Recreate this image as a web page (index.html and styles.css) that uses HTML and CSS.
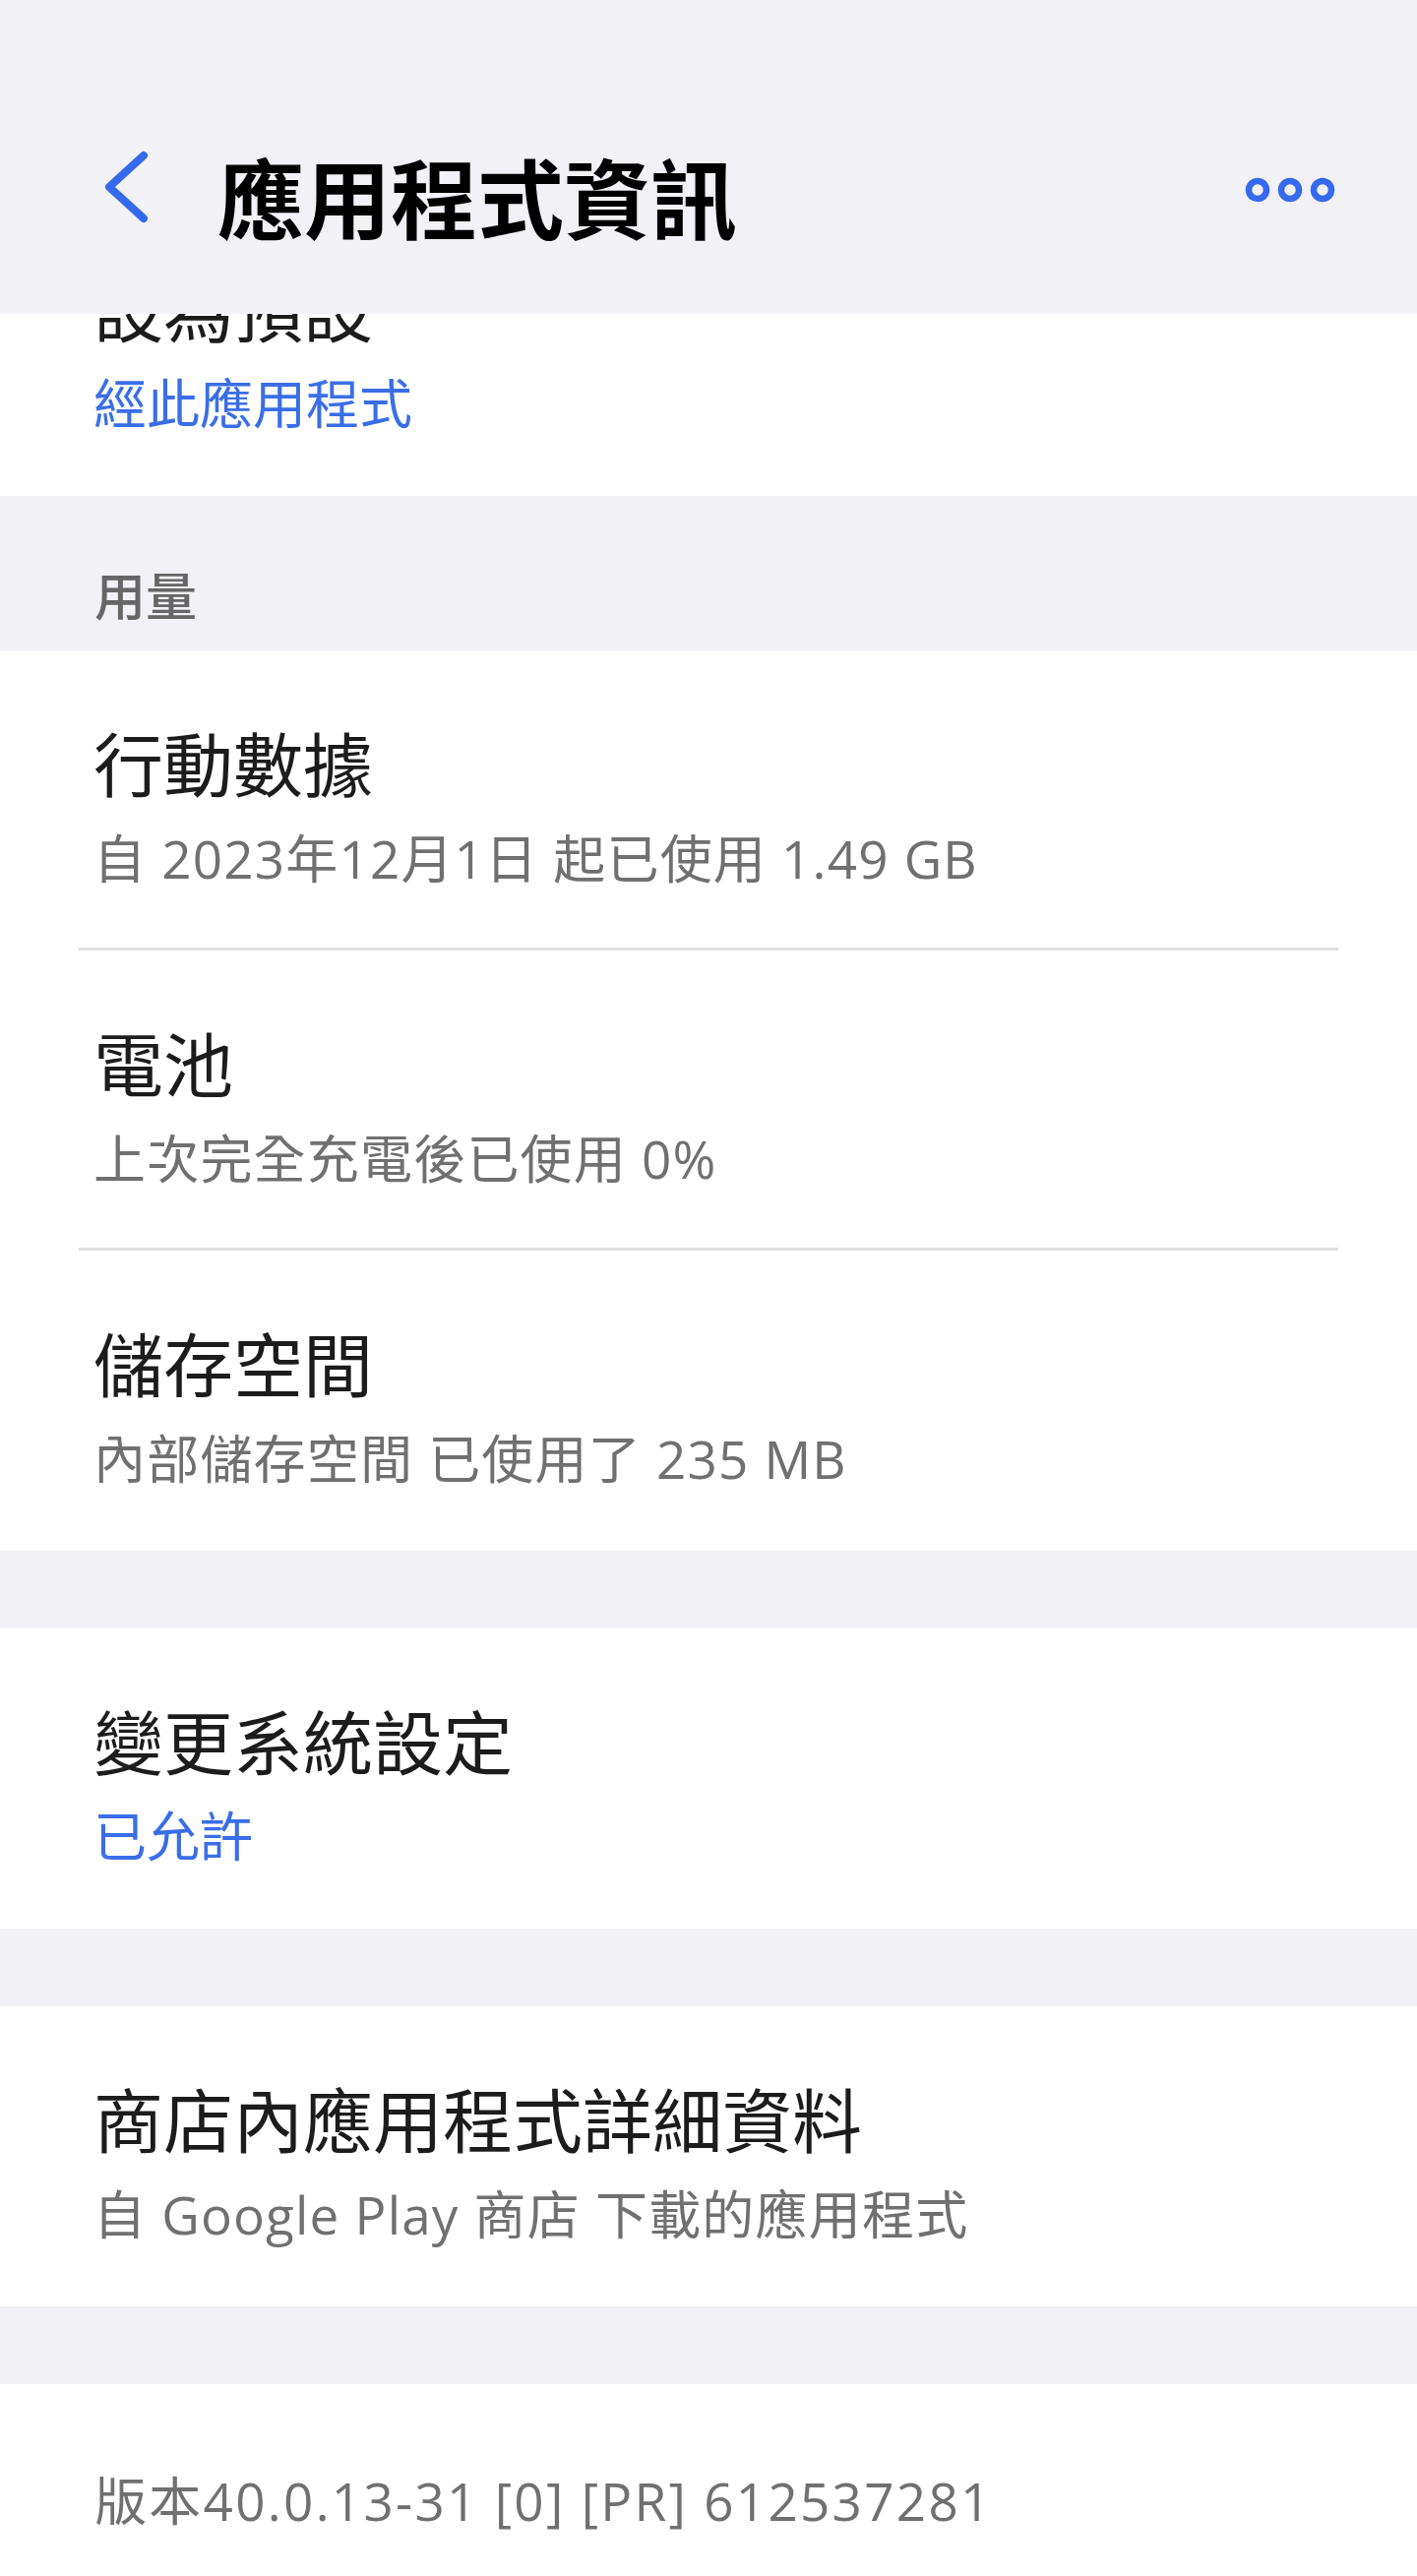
FILE: index.html
```html
<!DOCTYPE html>
<html lang="zh-Hant">
<head>
<meta charset="utf-8">
<title>應用程式資訊</title>
<link rel="stylesheet" href="styles.css">
</head>
<body>
<div class="page">
  <header class="topbar">
    <button class="back" aria-label="返回">
      <svg width="60" height="80" viewBox="0 0 60 80"><polyline points="40,5 5,37 40,69" fill="none" stroke="#3669ee" stroke-width="8" stroke-linecap="round" stroke-linejoin="round"/></svg>
    </button>
    <h1 class="title">應用程式資訊</h1>
    <button class="more" aria-label="更多">
      <svg width="100" height="40" viewBox="0 0 100 40"><circle cx="15" cy="20" r="9" fill="none" stroke="#3669ee" stroke-width="6.5"/><circle cx="48" cy="20" r="9" fill="none" stroke="#3669ee" stroke-width="6.5"/><circle cx="81" cy="20" r="9" fill="none" stroke="#3669ee" stroke-width="6.5"/></svg>
    </button>
  </header>

  <section class="card clipped">
    <div class="item first">
      <div class="item-title">設為預設</div>
      <div class="item-sub blue">經此應用程式</div>
    </div>
  </section>

  <div class="section-label">用量</div>

  <section class="card">
    <div class="item divided">
      <div class="item-title">行動數據</div>
      <div class="item-sub">自 2023年12月1日 起已使用 1.49 GB</div>
    </div>
    <div class="item divided">
      <div class="item-title">電池</div>
      <div class="item-sub">上次完全充電後已使用 0%</div>
    </div>
    <div class="item">
      <div class="item-title">儲存空間</div>
      <div class="item-sub">內部儲存空間 已使用了 235 MB</div>
    </div>
  </section>

  <div class="gap"></div>

  <section class="card">
    <div class="item">
      <div class="item-title">變更系統設定</div>
      <div class="item-sub blue">已允許</div>
    </div>
  </section>

  <div class="gap"></div>

  <section class="card">
    <div class="item">
      <div class="item-title">商店內應用程式詳細資料</div>
      <div class="item-sub">自 Google Play 商店 下載的應用程式</div>
    </div>
  </section>

  <div class="gap"></div>

  <section class="card last">
    <div class="version">版本40.0.13-31 [0] [PR] 612537281</div>
  </section>
</div>
</body>
</html>
```

FILE: styles.css
```css
* { box-sizing: border-box; }
html, body { margin: 0; padding: 0; }
body {
  background: #f1f1f6;
  font-family: "Noto Sans CJK TC", "Noto Sans", sans-serif;
  color: #1c1c1c;
}
.page {
  width: 1440px;
  min-height: 2618px;
  display: flex;
  flex-direction: column;
  overflow: hidden;
}
.topbar {
  height: 319px;
  background: #f1f1f6;
  display: flex;
  align-items: center;
  padding: 76px 0 0 0;
  flex-shrink: 0;
}
.back {
  border: 0;
  background: none;
  padding: 0;
  margin-left: 106px;
  width: 60px;
  height: 80px;
  display: flex;
  margin-top: -10px;
}
.title {
  margin: 0 0 0 55px;
  font-size: 88px;
  font-weight: 700;
  line-height: 1;
  color: #000;
  letter-spacing: 0;
  flex: 1;
}
.more {
  border: 0;
  background: none;
  padding: 0;
  margin-right: 77px;
  width: 100px;
  height: 40px;
  display: flex;
  margin-top: -10px;
}
.card {
  background: #fff;
  flex-shrink: 0;
}
.card.clipped {
  height: 185px;
  overflow: hidden;
}
.item.first {
  margin-top: -120px;
}
.item {
  margin: 0 80px;
  padding: 62px 0 0 15px;
  height: 305px;
}
.item.divided {
  border-bottom: 3px solid #e0e0e2;
}
.item-title {
  font-size: 71px;
  line-height: 100px;
  color: #1c1c1c;
}
.item-sub {
  font-family: "Open Sans", "Noto Sans CJK TC", sans-serif;
  font-size: 53px;
  letter-spacing: 1.2px;
  line-height: 94px;
  padding-top: 3px;
  color: #707070;
}
.item-sub.blue {
  font-family: "Noto Sans CJK TC", sans-serif;
  font-size: 54px;
  letter-spacing: 0;
  padding-top: 0;
  color: #3a6ee8;
}
.section-label {
  height: 157px;
  padding: 70px 0 0 96px;
  font-size: 52px;
  line-height: 60px;
  font-weight: 500;
  color: #666;
  flex-shrink: 0;
}
.gap {
  height: 79px;
  flex-shrink: 0;
}
.card.last {
  flex: 1;
}
.version {
  font-family: "Open Sans", "Noto Sans CJK TC", sans-serif;
  padding: 69px 0 0 96px;
  font-size: 53px;
  letter-spacing: 2.3px;
  line-height: 100px;
  color: #707070;
}
```
